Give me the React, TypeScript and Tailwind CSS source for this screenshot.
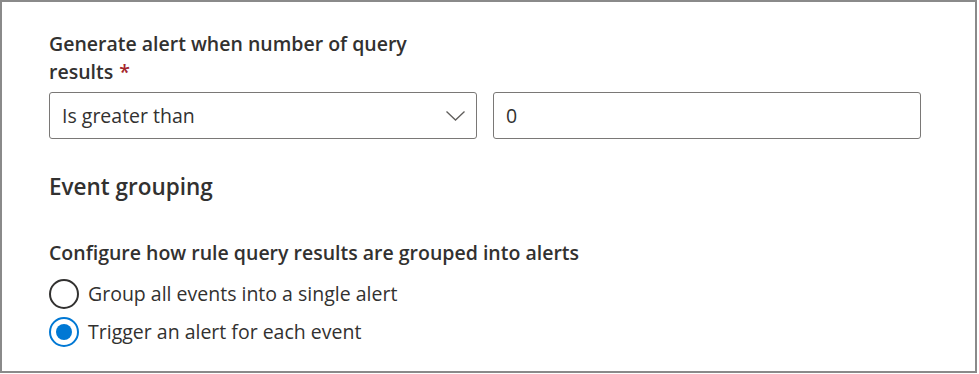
const OPTIONS = [
  { label: "Group all events into a single alert", checked: false },
  { label: "Trigger an alert for each event", checked: true },
];

export default function App() {
  return (
    <div
      className="w-[979px] h-[374px] bg-white text-[#323130]"
      style={{ fontFamily: '"Open Sans", "Noto Sans", sans-serif' }}
    >
      <div className="w-[977px] h-[373px] border-2 border-[#8a8a8a] pl-[47px] pt-[28px]">
        {/* Alert threshold */}
        <div className="text-[19.5px] font-semibold leading-[28px]">
          Generate alert when number of query
          <br />
          results<span className="text-[#a4262c] ml-[6px]">*</span>
        </div>
        <div className="flex gap-4 mt-[6px]">
          <div className="w-[428px] h-[47px] border border-[#7a7876] rounded-[3px] flex items-center justify-between pl-3 pr-[11px]">
            <span className="text-[19.5px]">Is greater than</span>
            <svg width="19" height="10" viewBox="0 0 19 10" fill="none" className="text-[#605e5c]">
              <path d="M0.5 0.5 L9.5 9 L18.5 0.5" stroke="currentColor" strokeWidth="1.3" />
            </svg>
          </div>
          <div className="w-[428px] h-[47px] border border-[#7a7876] rounded-[3px] flex items-center px-3">
            <span className="text-[19.5px]">0</span>
          </div>
        </div>

        {/* Event grouping */}
        <h2 className="text-[22.5px] font-semibold mt-[34px] leading-[28px]">Event grouping</h2>
        <div className="text-[19.5px] font-semibold mt-[38px] leading-[27px]">
          Configure how rule query results are grouped into alerts
        </div>
        <div className="flex flex-col gap-[8px] mt-[13px]">
          {OPTIONS.map(({ label, checked }) => (
            <div key={label} className="flex items-center gap-[9px]">
              <span
                className={
                  checked
                    ? "w-[30px] h-[30px] rounded-full border-2 border-[#0078d4] flex items-center justify-center"
                    : "w-[30px] h-[30px] rounded-full border-2 border-[#323130]"
                }
              >
                {checked && <span className="w-[16px] h-[16px] rounded-full bg-[#0078d4]" />}
              </span>
              <span className="text-[19.5px] leading-[30px]">{label}</span>
            </div>
          ))}
        </div>
      </div>
    </div>
  );
}
